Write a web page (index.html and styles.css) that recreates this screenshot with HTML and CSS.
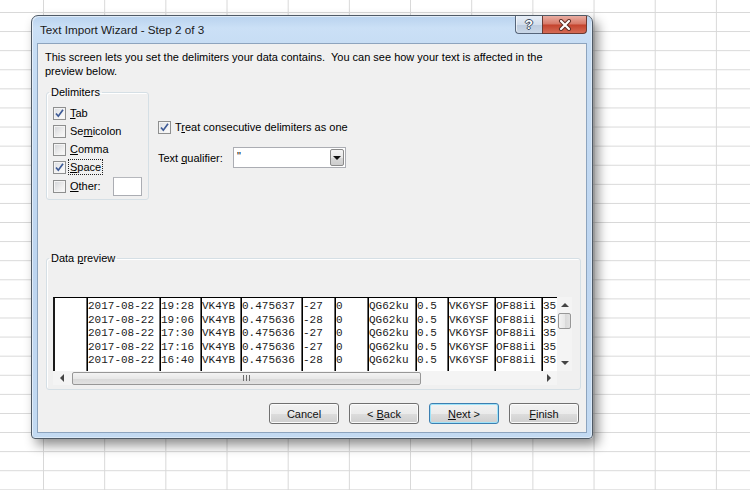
FILE: index.html
```html
<!DOCTYPE html>
<html>
<head>
<meta charset="utf-8">
<title>Text Import Wizard</title>
<link rel="stylesheet" href="styles.css">
</head>
<body>
<div class="desk">
  <div class="dialog">
    <div class="titlebar">
      <span class="title">Text Import Wizard - Step 2 of 3</span>
      <div class="caption-btns">
        <div class="cbtn help"><span>?</span></div>
        <div class="cbtn close">
          <svg width="14" height="12" viewBox="0 0 14 12"><path d="M3 2 L11 10 M11 2 L3 10" stroke="#5a2a22" stroke-width="4" stroke-linecap="round"/><path d="M3 2 L11 10 M11 2 L3 10" stroke="#fff" stroke-width="2.2" stroke-linecap="round"/></svg>
        </div>
      </div>
    </div>
    <div class="client">
      <p class="intro">This screen lets you set the delimiters your data contains.&nbsp; You can see how your text is affected in the<br>preview below.</p>
      <div class="options">
        <fieldset class="group delims">
          <legend>Delimiters</legend>
          <div class="chk-row"><span class="box checked"><svg width="11" height="11" viewBox="0 0 11 11"><path d="M2 5.5 L4.3 8.2 L9 1.8" fill="none" stroke="#3d5a96" stroke-width="1.7"/></svg></span><span><u>T</u>ab</span></div>
          <div class="chk-row"><span class="box"></span><span>Se<u>m</u>icolon</span></div>
          <div class="chk-row"><span class="box"></span><span><u>C</u>omma</span></div>
          <div class="chk-row"><span class="box checked"><svg width="11" height="11" viewBox="0 0 11 11"><path d="M2 5.5 L4.3 8.2 L9 1.8" fill="none" stroke="#3d5a96" stroke-width="1.7"/></svg></span><span class="focus"><u>S</u>pace</span></div>
          <div class="chk-row other"><span class="box"></span><span><u>O</u>ther:</span><span class="other-input"></span></div>
        </fieldset>
        <div class="right-opts">
          <div class="chk-row"><span class="box checked"><svg width="11" height="11" viewBox="0 0 11 11"><path d="M2 5.5 L4.3 8.2 L9 1.8" fill="none" stroke="#3d5a96" stroke-width="1.7"/></svg></span><span>T<u>r</u>eat consecutive delimiters as one</span></div>
          <div class="qual-row">
            <span class="qual-label">Text <u>q</u>ualifier:</span>
            <div class="combo"><span class="val">"</span><span class="drop"><span class="tri-down"></span></span></div>
          </div>
        </div>
      </div>
      <fieldset class="group pgroup">
        <legend>Data <u>p</u>review</legend>
        <div class="preview">
          <div class="table">
            <div class="col c0"></div>
            <div class="col c1">2017-08-22
2017-08-22
2017-08-22
2017-08-22
2017-08-22</div>
            <div class="col c2">19:28
19:06
17:30
17:16
16:40</div>
            <div class="col c3">VK4YB
VK4YB
VK4YB
VK4YB
VK4YB</div>
            <div class="col c4">0.475637
0.475636
0.475636
0.475636
0.475636</div>
            <div class="col c5">-27
-28
-27
-27
-28</div>
            <div class="col c6">0
0
0
0
0</div>
            <div class="col c7">QG62ku
QG62ku
QG62ku
QG62ku
QG62ku</div>
            <div class="col c8">0.5
0.5
0.5
0.5
0.5</div>
            <div class="col c9">VK6YSF
VK6YSF
VK6YSF
VK6YSF
VK6YSF</div>
            <div class="col c10">OF88ii
OF88ii
OF88ii
OF88ii
OF88ii</div>
            <div class="col c11">35
35
35
35
35</div>
          </div>
          <div class="vscroll">
            <div class="sb-btn v"><span class="tri-up"></span></div>
            <div class="vthumb"></div>
            <div class="sb-fill"></div>
            <div class="sb-btn v"><span class="tri-down small"></span></div>
          </div>
          <div class="hscroll">
            <div class="sb-btn h"><span class="tri-left"></span></div>
            <div class="hthumb"><span class="grip"></span></div>
            <div class="sb-fill"></div>
            <div class="sb-btn h"><span class="tri-right"></span></div>
          </div>
          <div class="corner"></div>
        </div>
      </fieldset>
      <div class="buttons">
        <div class="btn"><span>Cancel</span></div>
        <div class="btn"><span>&lt; <u>B</u>ack</span></div>
        <div class="btn default"><span><u>N</u>ext &gt;</span></div>
        <div class="btn"><span><u>F</u>inish</span></div>
      </div>
    </div>
  </div>
</div>
</body>
</html>
```

FILE: styles.css
```css
* { box-sizing: border-box; }
html, body { margin: 0; padding: 0; }
body {
  width: 750px;
  height: 490px;
  overflow: hidden;
  background-color: #fff;
  background-image:
    linear-gradient(to right, #d8d8d8 0, #d8d8d8 1px, transparent 1px),
    linear-gradient(to bottom, #d8d8d8 0, #d8d8d8 1px, transparent 1px);
  background-size: 61.18px 100%, 100% 19.1px;
  background-position: 43px 0, 0 12px;
  font-family: "Liberation Sans", Arial, sans-serif;
  font-size: 11px;
  color: #000;
}
.desk { padding: 15px 0 0 31px; }
.dialog {
  width: 562px;
  height: 424px;
  border: 1px solid #4f5a66;
  border-radius: 7px 7px 4px 4px;
  background: linear-gradient(to bottom, #b9d2ee 0, #cbe0f6 12px, #c7ddf4 27px, #bdd5f0 60%, #c3daf2 100%);
  box-shadow: 5px 6px 12px rgba(0,0,0,0.45), inset 1px 1px 0 rgba(255,255,255,0.55), inset -1px -1px 0 rgba(255,255,255,0.4);
  padding: 0 5px 5px;
  display: flex;
  flex-direction: column;
}
.titlebar {
  height: 27px;
  display: flex;
  align-items: flex-start;
}
.title {
  align-self: center;
  flex: 1;
  padding-left: 3px;
  font-size: 11.7px;
  color: #1a1a1a;
}
.caption-btns { display: flex; }
.cbtn {
  height: 18px;
  display: flex;
  align-items: center;
  justify-content: center;
  border: 1px solid #56657a;
  border-top: none;
}
.help {
  width: 27px;
  border-right: none;
  border-radius: 0 0 0 4px;
  background: linear-gradient(#e7eef7 0, #d3deec 50%, #bccbde 51%, #cad7e7 100%);
  box-shadow: inset 1px 0 0 rgba(255,255,255,0.6);
}
.help span {
  font-weight: bold;
  font-size: 13px;
  color: #fff;
  text-shadow: 1px 0 0 #3d4c60, -1px 0 0 #3d4c60, 0 1px 0 #3d4c60, 0 -1px 0 #3d4c60;
  line-height: 1;
}
.close {
  width: 45px;
  border-color: #6b3a32;
  border-radius: 0 0 4px 0;
  background: linear-gradient(#e9ada2 0, #d77866 48%, #c4432d 52%, #d56b55 100%);
}
.client {
  flex: 1;
  background: #f0f0f0;
  border: 1px solid #8da4be;
  padding: 6px 7px 0;
  display: flex;
  flex-direction: column;
}
.intro {
  margin: 0;
  line-height: 14px;
  white-space: nowrap;
}
.options {
  display: flex;
  align-items: flex-start;
  margin-top: 7px;
}
.group {
  margin: 0 0 0 1px;
  border: 1px solid #d5dfe5;
  border-radius: 3px;
  box-shadow: inset 1px 1px 0 #fff;
  min-width: 0;
}
.group legend {
  line-height: 14px;
  padding: 0 2px;
  margin-left: -4px;
}
.delims {
  width: 103px;
  height: 115px;
  padding: 5px 6px 3px;
}
.chk-row {
  display: flex;
  align-items: center;
  height: 18px;
  gap: 4px;
  white-space: nowrap;
}
.chk-row.other { height: 20px; }
.box {
  width: 13px;
  height: 13px;
  flex: none;
  border: 1px solid #8e8f8f;
  background: linear-gradient(135deg, #d2d4d8 0, #eeeeee 60%, #fbfbfb 100%);
  box-shadow: inset 0 0 0 1px #f4f4f4;
  display: flex;
  align-items: center;
  justify-content: center;
}
.box.checked {
  background: linear-gradient(135deg, #dadde2 0, #f2f2f2 60%, #fdfdfd 100%);
}
.focus {
  outline: 1px dotted #222;
  outline-offset: 1px;
}
.other-input {
  margin-left: auto;
  width: 29px;
  height: 19px;
  background: #fff;
  border: 1px solid #abadb3;
  border-top-color: #b6b8bd;
}
.right-opts {
  margin-left: 9px;
  padding-top: 33px;
}
.qual-row {
  display: flex;
  align-items: center;
  margin-top: 11px;
}
.qual-label { width: 75px; }
.combo {
  width: 113px;
  height: 21px;
  background: #fff;
  border: 1px solid #abadb3;
  display: flex;
  align-items: stretch;
}
.combo .val {
  flex: 1;
  padding-left: 3px;
  line-height: 16px;
}
.combo .drop {
  width: 14px;
  margin: 1px;
  border: 1px solid #8a8a8a;
  border-radius: 2px;
  background: linear-gradient(#f4f4f4 0, #e8e8e8 50%, #d9d9d9 51%, #cdcdcd 100%);
  display: flex;
  align-items: center;
  justify-content: center;
}
.tri-down {
  width: 0; height: 0;
  border-left: 4px solid transparent;
  border-right: 4px solid transparent;
  border-top: 4px solid #111;
}
.tri-down.small { border-top: 4px solid #444; }
.tri-up {
  width: 0; height: 0;
  border-left: 4px solid transparent;
  border-right: 4px solid transparent;
  border-bottom: 4px solid #444;
}
.tri-left {
  width: 0; height: 0;
  border-top: 4px solid transparent;
  border-bottom: 4px solid transparent;
  border-right: 4px solid #444;
}
.tri-right {
  width: 0; height: 0;
  border-top: 4px solid transparent;
  border-bottom: 4px solid transparent;
  border-left: 4px solid #444;
}
.pgroup {
  width: 535px;
  height: 139px;
  margin-top: 51px;
  padding: 32px 7px 4px 6px;
}
.preview {
  display: grid;
  grid-template-columns: 504px 15px;
  grid-template-rows: 74px 14px;
  width: 519px;
  height: 88px;
}
.table {
  background: #fff;
  border-top: 1px solid #000;
  border-left: 2px solid #1a1a1a;
  display: flex;
  overflow: hidden;
  font-family: "Liberation Mono", "Courier New", monospace;
  font-size: 11px;
  line-height: 13.5px;
  color: #1c1c1c;
}
.col {
  flex: none;
  white-space: pre;
  overflow: hidden;
  padding-top: 2px;
  border-left: 1px solid #000;
  box-shadow: -1px 0 0 #6a6a6a;
}
.c0 { width: 32px; border-left: none; box-shadow: none; }
.c1 { width: 73px; }
.c2 { width: 41px; }
.c3 { width: 40px; }
.c4 { width: 61px; }
.c5 { width: 33px; }
.c6 { width: 33px; }
.c7 { width: 48px; }
.c8 { width: 32px; }
.c9 { width: 47px; }
.c10 { width: 47px; }
.c11 { flex: 1; }
.vscroll {
  background: #f4f4f4;
  display: flex;
  flex-direction: column;
  align-items: center;
}
.sb-btn {
  display: flex;
  align-items: center;
  justify-content: center;
  flex: none;
}
.sb-btn.v { width: 15px; height: 16px; }
.sb-btn.h { width: 17px; height: 14px; }
.sb-fill { flex: 1; }
.vthumb {
  width: 13px;
  height: 16px;
  border: 1px solid #979797;
  border-radius: 2px;
  background: linear-gradient(to right, #f3f3f3 0, #e8e8e8 50%, #d8d8d8 51%, #e2e2e2 100%);
}
.hscroll {
  background: #f4f4f4;
  display: flex;
  align-items: center;
}
.hthumb {
  width: 349px;
  height: 13px;
  margin-left: 2px;
  border: 1px solid #979797;
  border-radius: 2px;
  background: linear-gradient(#f3f3f3 0, #e8e8e8 50%, #d8d8d8 51%, #e2e2e2 100%);
  display: flex;
  align-items: center;
  justify-content: center;
}
.grip {
  width: 7px;
  height: 6px;
  background: repeating-linear-gradient(to right, #6d6d6d 0, #6d6d6d 1px, transparent 1px, transparent 3px);
}
.corner { background: #f0f0f0; }
.buttons {
  margin-top: 13px;
  display: flex;
  justify-content: flex-end;
  gap: 10px;
}
.btn {
  width: 70px;
  height: 21px;
  border: 1px solid #707070;
  border-radius: 3px;
  background: linear-gradient(#f2f2f2 0, #ebebeb 50%, #dddddd 51%, #cfcfcf 100%);
  box-shadow: inset 0 0 0 1px #fbfbfb;
  display: flex;
  align-items: center;
  justify-content: center;
  color: #111;
}
.btn.default {
  border-color: #3c7fb1;
  box-shadow: inset 0 0 0 1px #9fe3f9;
}
```
